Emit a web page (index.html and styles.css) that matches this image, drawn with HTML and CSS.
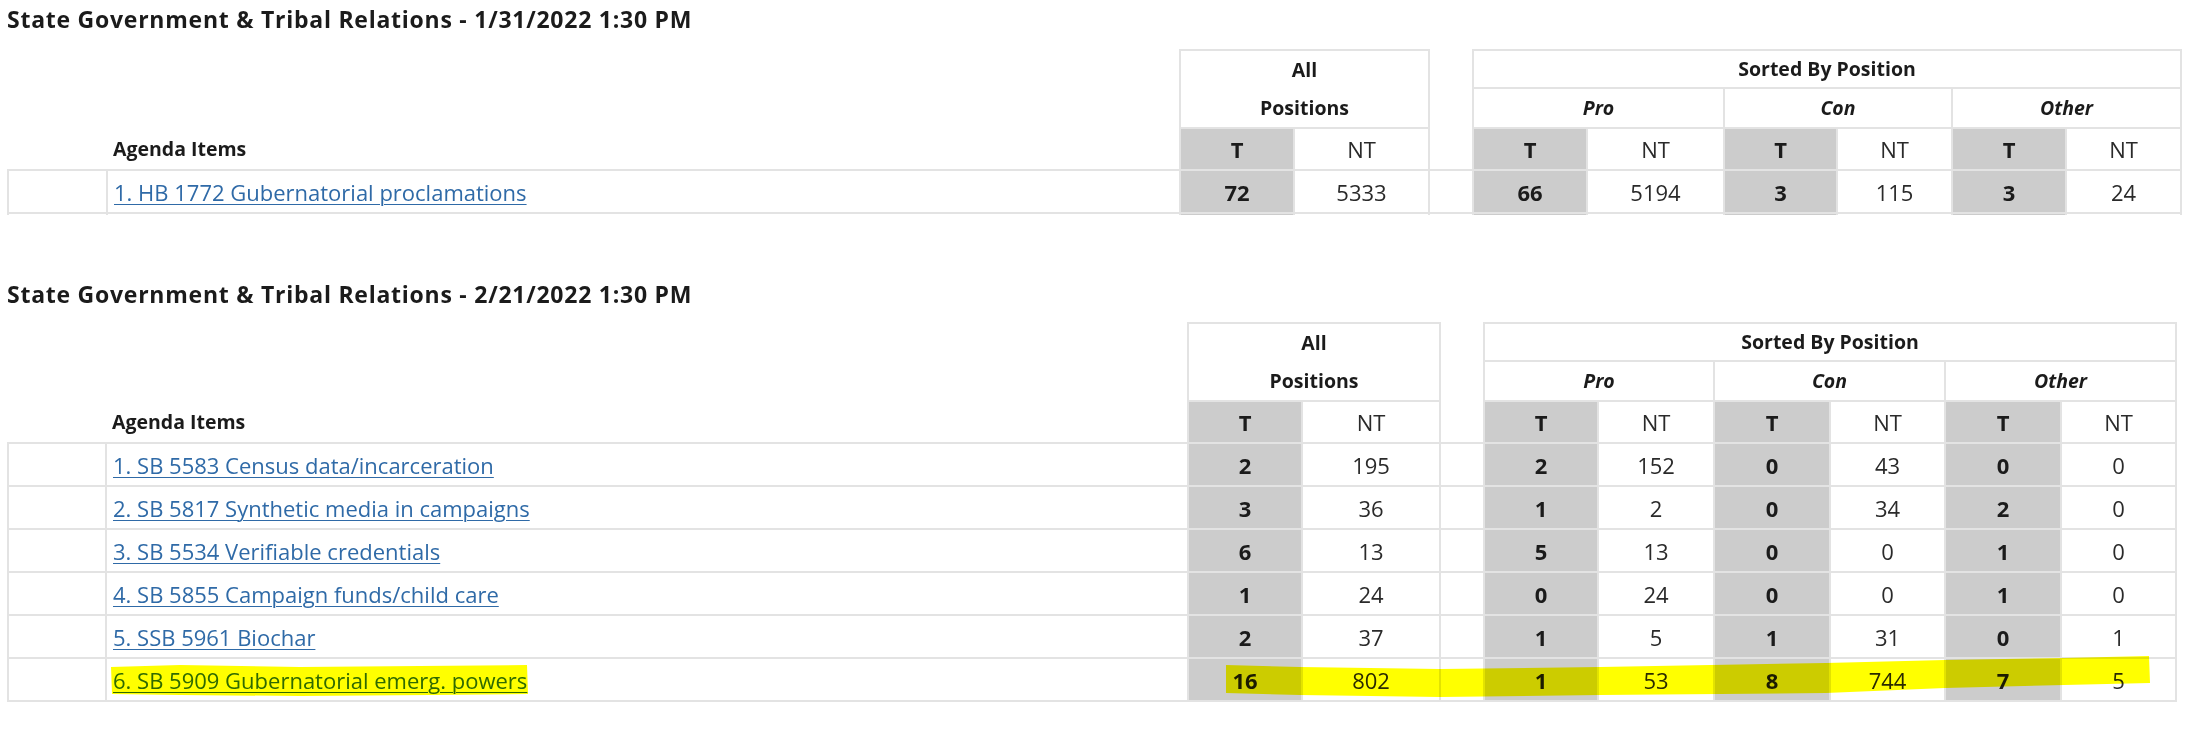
FILE: index.html
```html
<!DOCTYPE html>
<html>
<head>
<meta charset="utf-8">
<link rel="stylesheet" href="styles.css">
</head>
<body>
<div class="page">
  <section class="section s1">
    <h2 class="title">State Government &amp; Tribal Relations - 1/31/2022 1:30 PM</h2>
    <div class="clip">
      <table class="grid g1">
        <colgroup>
          <col class="w-blank"><col class="w-item"><col class="w-t"><col class="w-nt"><col class="w-gap">
          <col class="w-pt"><col class="w-pn"><col class="w-ct"><col class="w-cn"><col class="w-ot"><col class="w-on">
        </colgroup>
        <tr class="r1">
          <td colspan="2"></td>
          <th class="hbox allpos" colspan="2" rowspan="2">All<br>Positions</th>
          <td class="gap-h"></td>
          <th class="hbox" colspan="6">Sorted By Position</th>
        </tr>
        <tr class="r2">
          <td colspan="2"></td>
          <td class="gap-h"></td>
          <th class="hbox pos" colspan="2">Pro</th>
          <th class="hbox pos" colspan="2">Con</th>
          <th class="hbox pos" colspan="2">Other</th>
        </tr>
        <tr class="r3">
          <td></td>
          <th class="agenda">Agenda Items</th>
          <th class="c-t">T</th><th class="c-nt">NT</th>
          <td class="gap-h"></td>
          <th class="c-t">T</th><th class="c-nt">NT</th>
          <th class="c-t">T</th><th class="c-nt">NT</th>
          <th class="c-t">T</th><th class="c-nt">NT</th>
        </tr>
        <tr class="rd">
          <td class="c-blank"></td>
          <td class="c-item"><a href="#">1. HB 1772 Gubernatorial proclamations</a></td>
          <td class="c-t">72</td><td class="c-nt">5333</td>
          <td class="c-gap"></td>
          <td class="c-t">66</td><td class="c-nt">5194</td>
          <td class="c-t">3</td><td class="c-nt">115</td>
          <td class="c-t">3</td><td class="c-nt">24</td>
        </tr>
        <tr class="rd">
          <td class="c-blank"></td><td class="c-item"></td>
          <td class="c-t"></td><td class="c-nt"></td><td class="c-gap"></td>
          <td class="c-t"></td><td class="c-nt"></td><td class="c-t"></td><td class="c-nt"></td><td class="c-t"></td><td class="c-nt"></td>
        </tr>
      </table>
    </div>
  </section>

  <section class="section s2">
    <h2 class="title">State Government &amp; Tribal Relations - 2/21/2022 1:30 PM</h2>
    <div class="clip">
      <table class="grid g2">
        <colgroup>
          <col class="w-blank"><col class="w-item"><col class="w-t"><col class="w-nt"><col class="w-gap">
          <col class="w-pt"><col class="w-pn"><col class="w-ct"><col class="w-cn"><col class="w-ot"><col class="w-on">
        </colgroup>
        <tr class="r1">
          <td colspan="2"></td>
          <th class="hbox allpos" colspan="2" rowspan="2">All<br>Positions</th>
          <td class="gap-h"></td>
          <th class="hbox" colspan="6">Sorted By Position</th>
        </tr>
        <tr class="r2">
          <td colspan="2"></td>
          <td class="gap-h"></td>
          <th class="hbox pos" colspan="2">Pro</th>
          <th class="hbox pos" colspan="2">Con</th>
          <th class="hbox pos" colspan="2">Other</th>
        </tr>
        <tr class="r3">
          <td></td>
          <th class="agenda">Agenda Items</th>
          <th class="c-t">T</th><th class="c-nt">NT</th>
          <td class="gap-h"></td>
          <th class="c-t">T</th><th class="c-nt">NT</th>
          <th class="c-t">T</th><th class="c-nt">NT</th>
          <th class="c-t">T</th><th class="c-nt">NT</th>
        </tr>
        <tr class="rd">
          <td class="c-blank"></td>
          <td class="c-item"><a href="#">1. SB 5583 Census data/incarceration</a></td>
          <td class="c-t">2</td><td class="c-nt">195</td><td class="c-gap"></td>
          <td class="c-t">2</td><td class="c-nt">152</td>
          <td class="c-t">0</td><td class="c-nt">43</td>
          <td class="c-t">0</td><td class="c-nt">0</td>
        </tr>
        <tr class="rd">
          <td class="c-blank"></td>
          <td class="c-item"><a href="#">2. SB 5817 Synthetic media in campaigns</a></td>
          <td class="c-t">3</td><td class="c-nt">36</td><td class="c-gap"></td>
          <td class="c-t">1</td><td class="c-nt">2</td>
          <td class="c-t">0</td><td class="c-nt">34</td>
          <td class="c-t">2</td><td class="c-nt">0</td>
        </tr>
        <tr class="rd">
          <td class="c-blank"></td>
          <td class="c-item"><a href="#">3. SB 5534 Verifiable credentials</a></td>
          <td class="c-t">6</td><td class="c-nt">13</td><td class="c-gap"></td>
          <td class="c-t">5</td><td class="c-nt">13</td>
          <td class="c-t">0</td><td class="c-nt">0</td>
          <td class="c-t">1</td><td class="c-nt">0</td>
        </tr>
        <tr class="rd">
          <td class="c-blank"></td>
          <td class="c-item"><a href="#">4. SB 5855 Campaign funds/child care</a></td>
          <td class="c-t">1</td><td class="c-nt">24</td><td class="c-gap"></td>
          <td class="c-t">0</td><td class="c-nt">24</td>
          <td class="c-t">0</td><td class="c-nt">0</td>
          <td class="c-t">1</td><td class="c-nt">0</td>
        </tr>
        <tr class="rd">
          <td class="c-blank"></td>
          <td class="c-item"><a href="#">5. SSB 5961 Biochar</a></td>
          <td class="c-t">2</td><td class="c-nt">37</td><td class="c-gap"></td>
          <td class="c-t">1</td><td class="c-nt">5</td>
          <td class="c-t">1</td><td class="c-nt">31</td>
          <td class="c-t">0</td><td class="c-nt">1</td>
        </tr>
        <tr class="rd">
          <td class="c-blank"></td>
          <td class="c-item"><a href="#">6. SB 5909 Gubernatorial emerg. powers</a></td>
          <td class="c-t">16</td><td class="c-nt">802</td><td class="c-gap"></td>
          <td class="c-t">1</td><td class="c-nt">53</td>
          <td class="c-t">8</td><td class="c-nt">744</td>
          <td class="c-t">7</td><td class="c-nt">5</td>
        </tr>
        <tr class="rd">
          <td class="c-blank"></td><td class="c-item"></td>
          <td class="c-t"></td><td class="c-nt"></td><td class="c-gap"></td>
          <td class="c-t"></td><td class="c-nt"></td><td class="c-t"></td><td class="c-nt"></td><td class="c-t"></td><td class="c-nt"></td>
        </tr>
      </table>
    </div>
  </section>

  <svg class="marker" width="2189" height="732" viewBox="0 0 2189 732" aria-hidden="true">
    <polygon points="111,667 180,665 300,667 420,666 527,665 528,694 430,695 300,696 180,695 112,694" />
    <polygon points="1226,665 1300,667 1440,669 1600,667 1826,663 1945,660 2064,658 2149,656 2150,683 2064,685 1945,688 1826,693 1600,695 1440,697 1300,695 1226,693" />
  </svg>
</div>
</body>
</html>
```
FILE: styles.css
```css
html, body {
  margin: 0;
  padding: 0;
  background: #ffffff;
}

body {
  font-family: "Open Sans", "Noto Sans", "Liberation Sans", sans-serif;
  color: #222222;
}

.page {
  position: relative;
  width: 2189px;
  height: 732px;
  overflow: hidden;
}

.section {
  padding-left: 7px;
}

.s1 {
  padding-top: 5px;
}

.s2 {
  padding-top: 65px;
}

.title {
  margin: 0;
  font-size: 23px;
  font-weight: 700;
  letter-spacing: 0.75px;
  line-height: 29px;
  color: #1b1b1b;
}

.clip {
  overflow: hidden;
}

.s1 .clip {
  margin-top: 15px;
  height: 166px;
}

.s2 .clip {
  margin-top: 13px;
  height: 380px;
}

.grid {
  border-collapse: collapse;
  table-layout: fixed;
}

.g1 { width: 2173px; }
.g2 { width: 2168px; }

.g1 .w-blank { width: 99px; }
.g1 .w-item { width: 1073px; }
.g1 .w-t { width: 114px; }
.g1 .w-nt { width: 135px; }
.g1 .w-gap { width: 44px; }
.g1 .w-pt { width: 114px; }
.g1 .w-pn { width: 137px; }
.g1 .w-ct { width: 113px; }
.g1 .w-cn { width: 115px; }
.g1 .w-ot { width: 114px; }
.g1 .w-on { width: 115px; }

.g2 .w-blank { width: 98px; }
.g2 .w-item { width: 1082px; }
.g2 .w-t { width: 114px; }
.g2 .w-nt { width: 138px; }
.g2 .w-gap { width: 44px; }
.g2 .w-pt { width: 114px; }
.g2 .w-pn { width: 116px; }
.g2 .w-ct { width: 116px; }
.g2 .w-cn { width: 115px; }
.g2 .w-ot { width: 116px; }
.g2 .w-on { width: 115px; }

.grid td,
.grid th {
  padding: 0;
  border: none;
  font-size: 22px;
  font-weight: 400;
  line-height: 28px;
  text-align: center;
  vertical-align: middle;
  color: #222222;
}

.r1 { height: 38px; }
.r2 { height: 39px; }
.r3 { height: 42px; }
.rd { height: 43px; }

.grid .hbox {
  border: 2px solid #e3e3e3;
  font-size: 19.5px;
  font-weight: 700;
  color: #1b1b1b;
}

.grid .allpos {
  line-height: 38px;
}

.grid .pos {
  font-style: italic;
}

.grid .agenda {
  text-align: left;
  padding-left: 6px;
  font-size: 19.5px;
  font-weight: 700;
  color: #1b1b1b;
}

.grid .c-blank,
.grid .c-item,
.grid .c-t,
.grid .c-nt {
  border: 2px solid #e3e3e3;
}

.grid .c-gap {
  border-top: 2px solid #e3e3e3;
  border-bottom: 2px solid #e3e3e3;
}

.grid .c-item {
  text-align: left;
  padding-left: 6px;
  white-space: nowrap;
}

.grid .c-t {
  background: #cccccc;
  font-weight: 700;
  color: #1b1b1b;
}

.grid .c-nt {
  color: #2a2a2a;
}

.grid a {
  color: #2f6aa7;
  text-decoration: underline;
  text-underline-offset: 3px;
  text-decoration-thickness: 1px;
}

.marker {
  position: absolute;
  left: 0;
  top: 0;
  pointer-events: none;
  mix-blend-mode: multiply;
}

.marker polygon {
  fill: #ffff00;
}
```
